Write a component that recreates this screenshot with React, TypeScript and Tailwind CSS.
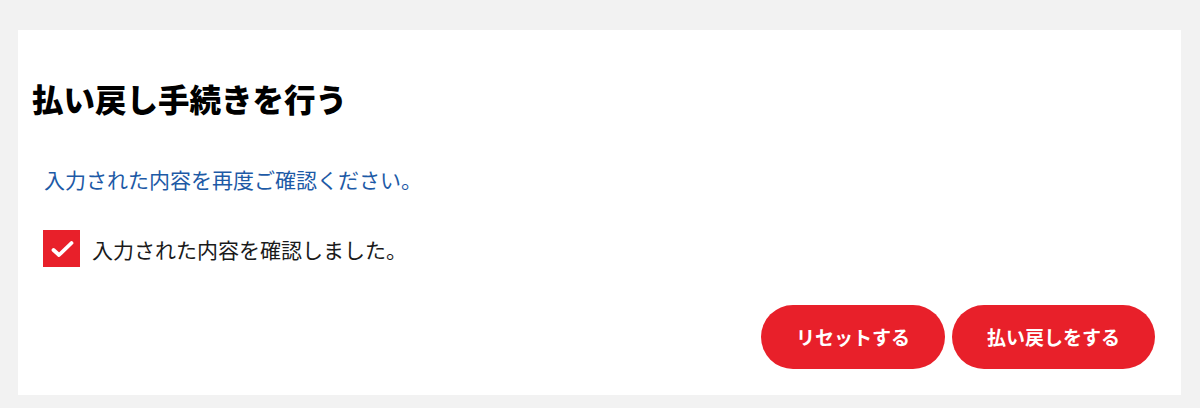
export default function App() {
  const font = { fontFamily: '"Noto Sans CJK JP", "Noto Sans", sans-serif' }
  return (
    <div className="min-h-[408px] bg-[#f2f2f2] pt-[30px] pb-[13px] px-[18px]" style={font}>
      <div className="bg-white w-[1163px] h-[365px] pt-[47px] pb-[26px] pl-[14px] pr-[26px] flex flex-col">
        <h1 className="text-[31.5px] leading-[42px] font-black text-black">払い戻し手続きを行う</h1>

        <p className="mt-[45px] ml-[12px] text-[21px] leading-[30px] text-[#1d5aa6]">
          入力された内容を再度ご確認ください。
        </p>

        <label className="mt-[36px] ml-[11px] flex items-center gap-[12px] h-[37px]">
          <span className="w-[37px] h-[37px] bg-[#e8202a] flex items-center justify-center">
            <svg width="37" height="37" viewBox="0 0 37 37" fill="none">
              <path d="M10.5 20 L16 25 L28.5 13" stroke="white" strokeWidth="3.8" strokeLinecap="round" strokeLinejoin="round" />
            </svg>
          </span>
          <span className="text-[21px] leading-[30px] text-[#1a1a1a]">入力された内容を確認しました。</span>
        </label>

        <div className="mt-auto flex justify-end gap-[7px]">
          <button className="w-[184px] h-[64px] rounded-full bg-[#e8202a] text-white text-[19px] font-bold">
            リセットする
          </button>
          <button className="w-[203px] h-[64px] rounded-full bg-[#e8202a] text-white text-[19px] font-bold">
            払い戻しをする
          </button>
        </div>
      </div>
    </div>
  )
}
